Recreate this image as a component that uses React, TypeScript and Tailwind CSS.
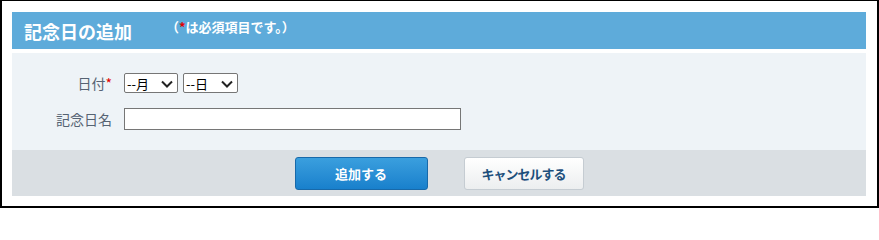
import React from "react";

const Chevron = () => (
  <svg width="12" height="8" viewBox="0 0 12 8" className="absolute right-[4px] top-[6px] pointer-events-none">
    <path d="M1 1.5 L6 6.5 L11 1.5" fill="none" stroke="#222" strokeWidth="2" />
  </svg>
);

const Select = ({ label, w }: { label: string; w: string }) => (
  <div className={`relative h-[20px] ${w} border border-[#767676] bg-white rounded-[2px] flex items-center pl-[2px] text-[13px] text-black leading-none`}>
    <span>{label}</span>
    <Chevron />
  </div>
);

export default function App() {
  return (
    <div
      className="w-[879px] h-[208px] box-border bg-white border-black border-t border-l-2 border-r-2 border-b-2 pt-[11px] pl-[10px] pr-[11px]"
      style={{ fontFamily: '"Noto Sans CJK JP", "Noto Sans", sans-serif' }}
    >
      <div className="h-[37px] bg-[#5eabda] flex items-center pl-[12px]">
        <span className="text-white font-bold text-[18px] leading-none">記念日の追加</span>
        <span className="ml-[34px] -mt-[8px] text-white font-bold text-[13px] leading-none">
          （<span className="text-[#e00000]">*</span>は必須項目です。）
        </span>
      </div>
      <div className="mt-[4px] h-[97px] bg-[#eef3f7] pt-[20px]">
        <div className="flex items-center h-[20px]">
          <div className="w-[100px] text-right text-[14px] text-[#566373] leading-none">
            日付<span className="text-[#e00000]">*</span>
          </div>
          <div className="ml-[12px] flex gap-[5px]">
            <Select label="--月" w="w-[54px]" />
            <Select label="--日" w="w-[55px]" />
          </div>
        </div>
        <div className="flex items-center h-[22px] mt-[15px]">
          <div className="w-[100px] text-right text-[14px] text-[#566373] leading-none">記念日名</div>
          <div className="ml-[12px] w-[337px] h-[22px] border border-[#767676] bg-white" />
        </div>
      </div>
      <div className="h-[46px] bg-[#dadfe3] flex items-center justify-center gap-[36px] pt-[1px]">
        <button className="w-[133px] h-[33px] rounded-[3px] border border-[#1869a9] bg-gradient-to-b from-[#3a9fde] to-[#1880cc] text-white font-bold text-[13px] leading-none">
          追加する
        </button>
        <button className="w-[120px] h-[33px] rounded-[3px] border border-[#c5ccd2] bg-gradient-to-b from-white to-[#eceeef] text-[#1d4f7c] font-bold text-[13px] leading-none tracking-[-1px]">
          キャンセルする
        </button>
      </div>
    </div>
  );
}
